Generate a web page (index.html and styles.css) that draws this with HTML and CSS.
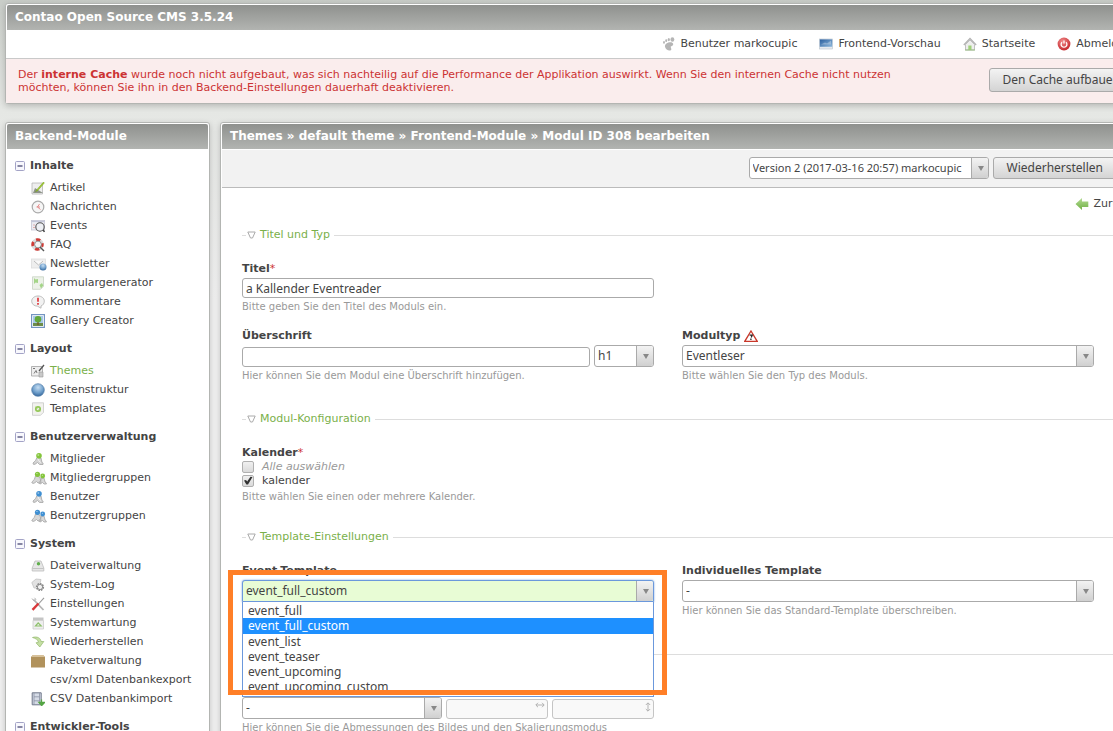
FILE: index.html
```html
<!DOCTYPE html>
<html lang="de">
<head>
<meta charset="utf-8">
<title>Contao Open Source CMS 3.5.24</title>
<link rel="stylesheet" href="styles.css">
</head>
<body>
<svg class="sprite" aria-hidden="true">
  <defs>
    <radialGradient id="globe" cx="50%" cy="30%" r="70%"><stop offset="0" stop-color="#c5ddf2"/><stop offset=".6" stop-color="#6f9fcb"/><stop offset="1" stop-color="#35679c"/></radialGradient>
    <linearGradient id="screen" x1="0" y1="0" x2="1" y2="1"><stop offset="0" stop-color="#2a5f9e"/><stop offset="1" stop-color="#8fb9dd"/></linearGradient>
    <radialGradient id="power" cx="40%" cy="30%" r="70%"><stop offset="0" stop-color="#f08a8a"/><stop offset="1" stop-color="#c62a2f"/></radialGradient>
    <linearGradient id="leaf" x1="0" y1="0" x2="0" y2="1"><stop offset="0" stop-color="#b5dc95"/><stop offset="1" stop-color="#6fb043"/></linearGradient>
  </defs>
  <symbol id="i-minus" viewBox="0 0 10 10"><rect x=".5" y=".5" width="9" height="9" rx="1" fill="#f8f8fd" stroke="#a3a3c6"/><path d="M2.500 5h5" stroke="#55557c" stroke-width="1.400"/></symbol>
  <symbol id="i-person" viewBox="0 0 14 14"><path d="M6 5.500Q5 9 2 11Q1.800 13 4 12.300L6.500 10.500L8.500 12.500H12Q12.800 11 11 10.500L10 6z" fill="#d4d4d4" stroke="#a5a5a5" stroke-width=".8"/><path d="M6.800 6.500Q7.300 9 9.800 10.500" fill="none" stroke="#f6f6f6"/><circle cx="8" cy="3.800" r="2.800" fill="currentColor"/><circle cx="7.300" cy="3" r="1" fill="#fff" opacity=".4"/></symbol>
  <symbol id="i-people" viewBox="0 0 16 14"><path d="M4.500 5Q4 9 .8 11Q.8 12.800 3 12.300L5.500 10.500L7 12H10L9 6zM10.500 7Q10 10 8 11.500Q8 13 9.500 12.800L11.500 11.500L13 13H15.400Q15.400 11.500 14 11L13 7z" fill="#d8d8d8" stroke="#a5a5a5" stroke-width=".8"/><circle cx="6.500" cy="3.300" r="2.600" fill="currentColor"/><circle cx="11.700" cy="5" r="2.400" fill="currentColor"/><path d="M5.300 2.500h1.300M10.900 4.300h1.100" stroke="#fff" opacity=".5"/></symbol>
</svg>

<div class="page">
  <header class="panel">
    <h1 class="panel-title">Contao Open Source CMS 3.5.24</h1>
    <nav class="topnav" aria-label="Benutzer">
      <a href="#"><svg class="ico" viewBox="0 0 14 14"><g fill="#b5b5b5"><ellipse cx="10.400" cy="2.500" rx="1.900" ry="2.300"/><ellipse cx="6.800" cy="2.600" rx="1.100" ry="1.600"/><ellipse cx="4.200" cy="3.700" rx="1" ry="1.400"/><ellipse cx="2" cy="5.400" rx=".9" ry="1.300"/><path d="M8.500 5.200C5 5.200 2.500 7.500 3 9.800C3.500 12.500 7 14.500 8.800 13.200C10.300 12 8.200 10.700 8.800 9.600C9.400 8.800 11.400 8.700 11.200 7C11 5.700 9.800 5.200 8.500 5.200z"/></g></svg>Benutzer markocupic</a>
      <a href="#"><svg class="ico" viewBox="0 0 14 14"><rect x=".4" y="2" width="13.200" height="10" fill="#e5eaef" stroke="#b9c4ce" stroke-width=".6"/><rect x=".8" y="2.400" width="12.400" height="7.400" fill="url(#screen)"/><path d="M2 7.500l4-2 2 1 4-3v4z" fill="#fff" opacity=".3"/></svg>Frontend-Vorschau</a>
      <a href="#"><svg class="ico" viewBox="0 0 14 14"><path d="M2.500 7.500V13h9V7.500L7 3z" fill="#eee" stroke="#aaa" stroke-width=".7"/><path d="M.8 8L7 1.500 13.200 8" fill="none" stroke="#b3b3b3" stroke-width="1.300"/><path d="M5.300 8.500h3.200V13H5.300z" fill="#9fd07a"/><path d="M2 13h10" stroke="#9cbf85"/></svg>Startseite</a>
      <a href="#"><svg class="ico" viewBox="0 0 14 14"><circle cx="7" cy="7" r="6.400" fill="url(#power)"/><path d="M5 5.200a2.900 2.900 0 1 0 4 0" fill="none" stroke="#fff" stroke-width="1.300"/><path d="M7 3.500v3" stroke="#fff" stroke-width="1.300"/></svg>Abmelden</a>
    </nav>
    <div class="warning">
      <p>Der <strong>interne Cache</strong> wurde noch nicht aufgebaut, was sich nachteilig auf die Performance der Applikation auswirkt. Wenn Sie den internen Cache nicht nutzen möchten, können Sie ihn in den Backend-Einstellungen dauerhaft deaktivieren.</p>
      <button class="btn btn-tall" type="button">Den Cache aufbauen</button>
    </div>
  </header>

  <div class="columns">
    <nav class="panel sidebar" aria-label="Backend-Module">
      <h2 class="panel-title">Backend-Module</h2>
      <div class="groups">
        <section>
          <h3><svg class="toggle"><use href="#i-minus"/></svg>Inhalte</h3>
          <ul>
            <li><a href="#"><svg class="ico" viewBox="0 0 14 14"><path d="M1 2h10.500v11H1z" fill="#eee" stroke="#b5b5b5" stroke-width=".8"/><path d="M2 12L4 7l8 5z" fill="#8d9488"/><path d="M12.500 1L6 8.500l-1.500 2.200L7 9.300 13.300 2z" fill="#a6d32f" stroke="#70961c" stroke-width=".5"/></svg>Artikel</a></li>
            <li><a href="#"><svg class="ico" viewBox="0 0 14 14"><circle cx="7" cy="7" r="5.800" fill="#f6f6f6" stroke="#aaa" stroke-width="1.200"/><path d="M5.500 7H9M8.500 4L6.500 7l3 2.500" fill="none" stroke="#e27474" stroke-width=".8"/></svg>Nachrichten</a></li>
            <li><a href="#"><svg class="ico" viewBox="0 0 14 14"><rect x=".4" y="1.500" width="13.200" height="9.500" fill="#ececf2" stroke="#c5c5d4" stroke-width=".8"/><path d="M.5 2.500h13" stroke="#c3c6d9" stroke-width="1.200"/><path d="M2 6h2M2 8.500h2" stroke="#e2b0b0"/><circle cx="9" cy="8" r="4.200" fill="#eef0f5" stroke="#555" stroke-width="1.100"/><path d="M12 11l1.500 1.800" stroke="#444" stroke-width="1.500"/></svg>Events</a></li>
            <li><a href="#"><svg class="ico" viewBox="0 0 14 14"><circle cx="6.500" cy="6.500" r="4.700" fill="none" stroke="#ddd" stroke-width="3"/><circle cx="6.500" cy="6.500" r="4.700" fill="none" stroke="#d03a35" stroke-width="3" stroke-dasharray="4.200 3.180" stroke-dashoffset="2"/><circle cx="7" cy="6.500" r="3.400" fill="#f5f5f5" stroke="#777" stroke-width=".8"/><path d="M9 9l4 4" stroke="#555" stroke-width="1.500"/></svg>FAQ</a></li>
            <li><a href="#"><svg class="ico ico-wide" viewBox="0 0 16 14"><rect x=".5" y="2" width="14" height="9" fill="#eee" stroke="#ddd" stroke-width=".8"/><path d="M3 4l4.500 4L12 4" fill="#f9f9f9" stroke="#b5b5b5" stroke-width=".9"/><circle cx="12" cy="10" r="3.500" fill="url(#globe)"/></svg>Newsletter</a></li>
            <li><a href="#"><svg class="ico" viewBox="0 0 14 14"><path d="M1.500.800h11v9.500l-3 3h-8z" fill="#edf2e9" stroke="#c8d2c3" stroke-width=".8"/><path d="M3 2v6l1.500-1.500L7 7V3L4.500 3.500z" fill="#a4d588"/><path d="M8.500 9l2.500-2 1.300 2.500L10 12.500z" fill="#a4d588"/></svg>Formulargenerator</a></li>
            <li><a href="#"><svg class="ico" viewBox="0 0 14 14"><path d="M7 1C3.300 1 .7 3.300.7 6.200S3 11 6.500 11.200L10 13.200V11c2-.8 3.300-2.500 3.300-4.800C13.300 3.300 10.700 1 7 1z" fill="#f2f2f2" stroke="#bbb"/><path d="M7 2.800v4M7 8v1.800" stroke="#e0393e" stroke-width="1.700"/></svg>Kommentare</a></li>
            <li><a href="#"><svg class="ico" viewBox="0 0 14 14"><rect x=".6" y=".6" width="12.800" height="12.800" fill="#fff" stroke="#7394c1" stroke-width="1.200"/><path d="M2 2h10v7H2z" fill="#a7c9e8"/><path d="M2 9h10v3H2z" fill="#6c8d4a"/><path d="M6.300 7h1.400v4H6.300z" fill="#77572f"/><circle cx="7" cy="5.300" r="3.300" fill="#62a83a"/></svg>Gallery Creator</a></li>
          </ul>
        </section>
        <section>
          <h3><svg class="toggle"><use href="#i-minus"/></svg>Layout</h3>
          <ul>
            <li><a href="#" class="active" aria-current="page"><svg class="ico" viewBox="0 0 14 14"><path d="M.5 2.500h11V12H.5z" fill="#eee" stroke="#aaa" stroke-width=".9"/><path d="M2 4.500h2M3 9.500l2-3 1 2.500" fill="none" stroke="#777"/><path d="M13 1L8 7" stroke="#555" stroke-width="1.300"/><path d="M8 8h4v5H8z" fill="#c9c9c9" stroke="#999" stroke-width=".6"/></svg>Themes</a></li>
            <li><a href="#"><svg class="ico" viewBox="0 0 14 14"><circle cx="7" cy="7" r="6.300" fill="url(#globe)" stroke="#5580aa" stroke-width=".7"/></svg>Seitenstruktur</a></li>
            <li><a href="#"><svg class="ico" viewBox="0 0 14 14"><path d="M1.500.800h11v9.500l-3 3h-8z" fill="#f2f2ee" stroke="#c8c8c8" stroke-width=".8"/><circle cx="7" cy="7" r="2.200" fill="none" stroke="#93c756" stroke-width="1.700"/><path d="M4 4.500l6 5" stroke="#93c756" stroke-width=".8" opacity=".5"/></svg>Templates</a></li>
          </ul>
        </section>
        <section>
          <h3><svg class="toggle"><use href="#i-minus"/></svg>Benutzerverwaltung</h3>
          <ul>
            <li><a href="#"><svg class="ico member"><use href="#i-person"/></svg>Mitglieder</a></li>
            <li><a href="#"><svg class="ico ico-wide member"><use href="#i-people"/></svg>Mitgliedergruppen</a></li>
            <li><a href="#"><svg class="ico user"><use href="#i-person"/></svg>Benutzer</a></li>
            <li><a href="#"><svg class="ico ico-wide user"><use href="#i-people"/></svg>Benutzergruppen</a></li>
          </ul>
        </section>
        <section>
          <h3><svg class="toggle"><use href="#i-minus"/></svg>System</h3>
          <ul>
            <li><a href="#"><svg class="ico" viewBox="0 0 14 14"><path d="M4 2h6l2.800 7v3H1.200V9z" fill="#e6e6e6" stroke="#bbb" stroke-width=".8"/><path d="M1.500 9.500h11" stroke="#bbb" stroke-width=".8"/><circle cx="7.500" cy="4.800" r="1.700" fill="#5fae4b"/></svg>Dateiverwaltung</a></li>
            <li><a href="#"><svg class="ico" viewBox="0 0 14 14"><path d="M.8 4.500L5 1l5 .5L8 10H3z" fill="#e2e2e2" stroke="#bbb" stroke-width=".7"/><circle cx="9" cy="9" r="3.300" fill="#f2f2f2" stroke="#888" stroke-width="1.600" stroke-dasharray="1.600 .9"/><circle cx="9" cy="9" r="2.600" fill="none" stroke="#888" stroke-width=".9"/></svg>System-Log</a></li>
            <li><a href="#"><svg class="ico" viewBox="0 0 14 14"><path d="M2.500 2.500L12.500 13" stroke="#b5b5b5" stroke-width="1.800"/><path d="M1 1.500l2 2.500 2-1.500L3.500.8" fill="none" stroke="#b5b5b5"/><path d="M13 .8L7.500 7" stroke="#999" stroke-width="1.100"/><path d="M7.500 6.500L1.500 12.800" stroke="#d8383b" stroke-width="2.400"/></svg>Einstellungen</a></li>
            <li><a href="#"><svg class="ico" viewBox="0 0 14 14"><path d="M2 1.500h10.500v3H2z" fill="#c5c5c5"/><path d="M2 4.500h10.500V13H2z" fill="#eee" stroke="#ccc" stroke-width=".8"/><path d="M4.500 10L7.200 6.800l3 3.200z" fill="none" stroke="#8dc06a" stroke-width="1.200"/></svg>Systemwartung</a></li>
            <li><a href="#"><svg class="ico" viewBox="0 0 14 14"><path d="M1.500 2.500C6 1 9.800 3 10 6.500h2.800L8.800 12 5 7.800l2.500-.6C7 4.500 4.500 3.500 1.500 2.500z" fill="#c5dfa4" stroke="#92b86b" stroke-width=".7"/></svg>Wiederherstellen</a></li>
            <li><a href="#"><svg class="ico" viewBox="0 0 14 14"><path d="M0 3L2 1h10l2 2v10.500H0z" fill="#b1925c"/><path d="M0 3L2 1h10l2 2z" fill="#d7c19a"/></svg>Paketverwaltung</a></li>
            <li><a href="#"><span class="ico"></span>csv/xml Datenbankexport</a></li>
            <li><a href="#"><svg class="ico" viewBox="0 0 14 14"><path d="M1.200.800h9v12h-9z" fill="#d5dbe6" stroke="#6d7688"/><path d="M3 1v12M8.500 1v12M3 4.800h5.500M3 8.800h5.500" stroke="#8b93a5" stroke-width=".8"/><path d="M10.500 7.500v3.500M8 10.500h5.500L10.700 13.500z" fill="#55a545" stroke="#55a545" stroke-width="1.300"/></svg>CSV Datenbankimport</a></li>
          </ul>
        </section>
        <section>
          <h3><svg class="toggle"><use href="#i-minus"/></svg>Entwickler-Tools</h3>
        </section>
      </div>
    </nav>

    <main class="panel main">
      <h2 class="panel-title">Themes » default theme » Frontend-Module » Modul ID 308 bearbeiten</h2>
      <form class="versions">
        <span class="select version"><select aria-label="Version"><option>Version 2 (2017-03-16 20:57) markocupic</option></select></span>
        <button class="btn" type="button">Wiederherstellen</button>
      </form>
      <div class="back"><a href="#"><svg class="ico" viewBox="0 0 14 14"><path d="M.5 7L7 1v3.500h6.300v5.500H7V13z" fill="url(#leaf)"/></svg>Zurück</a></div>

      <form class="edit">
        <fieldset>
          <legend><svg class="tri" viewBox="0 0 9 8"><path d="M.8 1h7.400L5.500 7h-2z" fill="none" stroke="#aaa"/></svg>Titel und Typ</legend>
          <div class="fields">
            <div class="field wide">
              <label for="title">Titel<span class="req">*</span></label>
              <div class="half"><input id="title" type="text" value="a Kallender Eventreader"></div>
              <p class="help">Bitte geben Sie den Titel des Moduls ein.</p>
            </div>
            <div class="field">
              <label for="headline">Überschrift</label>
              <div class="controls headline">
                <input id="headline" type="text">
                <span class="select"><select aria-label="Ebene"><option>h1</option></select></span>
              </div>
              <p class="help">Hier können Sie dem Modul eine Überschrift hinzufügen.</p>
            </div>
            <div class="field">
              <label for="type">Modultyp <svg class="alert" viewBox="0 0 14 12"><path d="M7 1L13.200 11.300H.8z" fill="#fff" stroke="#c9382b" stroke-width="1.300"/><path d="M5.600 5.200h2.600L7.200 7.400M6.900 8.500v1.400" fill="none" stroke="#222" stroke-width="1.300"/></svg></label>
              <span class="select"><select id="type"><option>Eventleser</option></select></span>
              <p class="help">Bitte wählen Sie den Typ des Moduls.</p>
            </div>
          </div>
        </fieldset>

        <fieldset class="compact">
          <legend><svg class="tri" viewBox="0 0 9 8"><path d="M.8 1h7.400L5.500 7h-2z" fill="none" stroke="#aaa"/></svg>Modul-Konfiguration</legend>
          <div class="fields">
            <div class="field wide" role="group" aria-labelledby="cal">
              <span class="label" id="cal">Kalender<span class="req">*</span></span>
              <label class="check all"><input type="checkbox">Alle auswählen</label>
              <label class="check"><input type="checkbox" checked>kalender</label>
              <p class="help">Bitte wählen Sie einen oder mehrere Kalender.</p>
            </div>
          </div>
        </fieldset>

        <fieldset>
          <legend><svg class="tri" viewBox="0 0 9 8"><path d="M.8 1h7.400L5.500 7h-2z" fill="none" stroke="#aaa"/></svg>Template-Einstellungen</legend>
          <div class="fields">
            <div class="field">
              <label for="tpl">Event-Template</label>
              <div class="combo">
                <span class="select open"><select id="tpl"><option>event_full_custom</option></select></span>
                <ul class="menu" role="listbox" aria-label="Event-Template">
                  <li role="option">event_full</li>
                  <li role="option" aria-selected="true">event_full_custom</li>
                  <li role="option">event_list</li>
                  <li role="option">event_teaser</li>
                  <li role="option">event_upcoming</li>
                  <li role="option">event_upcoming_custom</li>
                </ul>
                <div class="marker"></div>
              </div>
            </div>
            <div class="field">
              <label for="custom">Individuelles Template</label>
              <span class="select"><select id="custom"><option>-</option></select></span>
              <p class="help">Hier können Sie das Standard-Template überschreiben.</p>
            </div>
          </div>
        </fieldset>

        <fieldset class="plain">
          <div class="fields">
            <div class="field">
              <div class="controls size">
                <span class="select"><select aria-label="Skalierungsmodus"><option>-</option></select></span>
                <span class="dim"><input type="text" aria-label="Breite" disabled><svg viewBox="0 0 10 6"><path d="M1 3h8M3 .8L.8 3 3 5.200M7 .8L9.200 3 7 5.200" fill="none" stroke="#aaa" stroke-width=".9"/></svg></span>
                <span class="dim tall"><input type="text" aria-label="Höhe" disabled><svg viewBox="0 0 6 10"><path d="M3 1v8M.8 3L3 .8 5.200 3M.8 7L3 9.200 5.200 7" fill="none" stroke="#aaa" stroke-width=".9"/></svg></span>
              </div>
              <p class="help">Hier können Sie die Abmessungen des Bildes und den Skalierungsmodus</p>
            </div>
          </div>
        </fieldset>
      </form>
    </main>
  </div>
</div>
</body>
</html>
```

FILE: styles.css
```css
* { box-sizing: border-box; }

html { height: 100%; overflow: hidden; }

body {
  margin: 0;
  min-height: 100%;
  background: #f1f1f1 linear-gradient(#c9cdc8, #e5e7e4 110px, #f1f1f1 300px) no-repeat;
  color: #444;
  font: 11px/14px "DejaVu Sans", Verdana, sans-serif;
}

h1, h2, h3, p, ul { margin: 0; padding: 0; }
ul { list-style: none; }
a { color: inherit; text-decoration: none; }
button, input, select { font: 12px/16px "Noto Sans", "Trebuchet MS", sans-serif; color: #444; }

.sprite { position: absolute; width: 0; height: 0; }

.page { margin-right: -31px; padding: 3px 0 0 5px; }

.panel {
  background: #fff;
  border: 1px solid #b3b5b2;
  border-radius: 3px;
  box-shadow: 0 2px 6px rgba(0, 0, 0, .2);
}

.panel-title {
  margin: 1px 1px 0;
  padding: 0 8px;
  border-radius: 2px 2px 0 0;
  background: linear-gradient(#8f918e, #b2b4b1);
  color: #fff;
  font-size: 12px;
  line-height: 25px;
}

.ico { flex: none; width: 14px; height: 14px; }
.ico-wide { width: 16px; margin-right: -2px; }

.topnav {
  display: flex;
  justify-content: flex-end;
  gap: 22px;
  height: 28px;
  padding-right: 11px;
  align-items: center;
}
.topnav a { display: flex; align-items: center; gap: 5px; }

.warning {
  display: flex;
  align-items: flex-start;
  justify-content: space-between;
  gap: 65px;
  padding: 9px 9px 9px 12px;
  border-top: 1px solid #c9c9c9;
  background: #faeded;
  color: #c33;
  line-height: 13px;
}

.btn {
  flex: none;
  height: 22px;
  padding: 0 13px;
  border: 1px solid #aaa;
  border-radius: 3px;
  background: linear-gradient(#f3f3f3, #d4d4d4);
}
.btn-tall { height: 24px; }

.columns { display: flex; gap: 10px; align-items: flex-start; padding-top: 18px; }

.sidebar { flex: none; width: 205px; }
.groups { padding: 4px 0 20px 9px; }
.groups section { padding-bottom: 6px; }
.groups h3 { display: flex; align-items: center; gap: 5px; font-size: 11px; line-height: 25px; }
.toggle { width: 10px; height: 10px; }
.groups li a { display: flex; align-items: center; gap: 5px; height: 19px; padding-left: 16px; }
.active { color: #7ab04a; }
.member { color: #84c53c; }
.user { color: #3f8fd2; }

.main { flex: 1; min-width: 0; }
.versions {
  display: flex;
  justify-content: flex-end;
  gap: 4px;
  margin: 1px 1px 0;
  padding: 7px 25px 8px;
  border-bottom: 1px solid #bbb;
  background: #f2f2f2;
}
.version { width: 240px; }
.version select { font-size: 11px; }
.back { display: flex; justify-content: flex-end; padding: 9px 11px 17px; }
.back a { display: flex; align-items: center; gap: 5px; }

.edit { padding: 0 21px; }

fieldset {
  margin: 0;
  min-width: 0;
  padding: 20px 28px 30px 0;
  border: 0;
  border-top: 1px solid #ddd;
}
.compact { padding-bottom: 27px; }
.plain { margin-top: 7px; padding-top: 42px; }
legend { display: flex; align-items: center; gap: 4px; margin-left: 4px; padding: 0 4px 0 1px; color: #7ab04a; }
.tri { width: 9px; height: 8px; }

.fields { display: grid; grid-template-columns: 1fr 1fr; gap: 16px 28px; }
.field { min-width: 0; }
.wide { grid-column: 1 / -1; }
.half { width: calc(50% - 14px); }
.field > label:first-child, .label { display: flex; align-items: center; gap: 4px; height: 14px; margin-bottom: 2px; font-weight: bold; }
.field > .label { margin-bottom: 0; }
.field > label:first-child:has(.req) { gap: 0; }
.label { gap: 0; }
.req { color: #c33; font-weight: normal; }
.alert { width: 14px; height: 12px; }
.help { margin-top: 3px; color: #999; font-size: 10px; line-height: 12px; white-space: nowrap; }

input[type="text"] {
  display: block;
  width: 100%;
  min-width: 0;
  height: 20px;
  padding: 0 3px;
  border: 1px solid #aaa;
  border-radius: 3px;
  background: #fff;
}
input[type="text"]:disabled { background: #f9f9f9; border-color: #c5c5c5; }

.select { position: relative; display: block; }
.select select {
  appearance: none;
  display: block;
  width: 100%;
  height: 22px;
  padding: 0 17px 0 3px;
  border: 1px solid #aaa;
  border-radius: 3px;
  background: #fff;
}
.select::before {
  content: "";
  position: absolute;
  top: 1px;
  right: 1px;
  bottom: 1px;
  width: 16px;
  border-left: 1px solid #aaa;
  border-radius: 0 2px 2px 0;
  background: linear-gradient(#f3f3f3, #d0d0d0);
  pointer-events: none;
}
.select::after {
  content: "";
  position: absolute;
  top: 9px;
  right: 5px;
  border: 3px solid transparent;
  border-top: 5px solid #888;
  border-bottom: 0;
  pointer-events: none;
}
.open select { border-color: #6b98dc; background: #e8fcd5; box-shadow: 0 0 2px #6b98dc; border-radius: 3px 3px 0 0; }

.controls { display: grid; align-items: end; gap: 4px; }
.headline { grid-template-columns: 1fr 60px; }
.size { grid-template-columns: 1fr 102px 102px; }

.dim { position: relative; }
.dim svg { position: absolute; top: 3px; right: 3px; width: 10px; height: 6px; }
.tall svg { width: 6px; height: 10px; }

.check { display: flex; align-items: center; gap: 8px; height: 14px; }
.all { color: #999; font-style: italic; }
.check input {
  appearance: none;
  width: 12px;
  height: 12px;
  margin: 0;
  border: 1px solid #b0b0b0;
  border-radius: 2px;
  background: linear-gradient(#f0f0f0, #dadada);
}
.check input:checked::before {
  content: "";
  display: block;
  width: 10px;
  height: 9px;
  background: #333;
  clip-path: polygon(10% 50%, 30% 45%, 42% 62%, 75% 8%, 95% 10%, 50% 95%, 34% 95%);
}

.combo { position: relative; }
.menu {
  position: absolute;
  z-index: 1;
  top: 22px;
  left: 0;
  right: 0;
  height: 95px;
  padding-top: 1px;
  overflow: hidden;
  border: 1px solid #6b98dc;
  border-top: 0;
  background: #fff;
  font: 12px/15px "Noto Sans", "Trebuchet MS", sans-serif;
}
.menu li { padding-left: 5px; }
.menu [aria-selected] { background: #1e90ff; color: #fff; line-height: 16px; }
.marker {
  position: absolute;
  z-index: 2;
  inset: -10px -13px -93px -14px;
  border: 5px solid #ff7f27;
  pointer-events: none;
}
```
